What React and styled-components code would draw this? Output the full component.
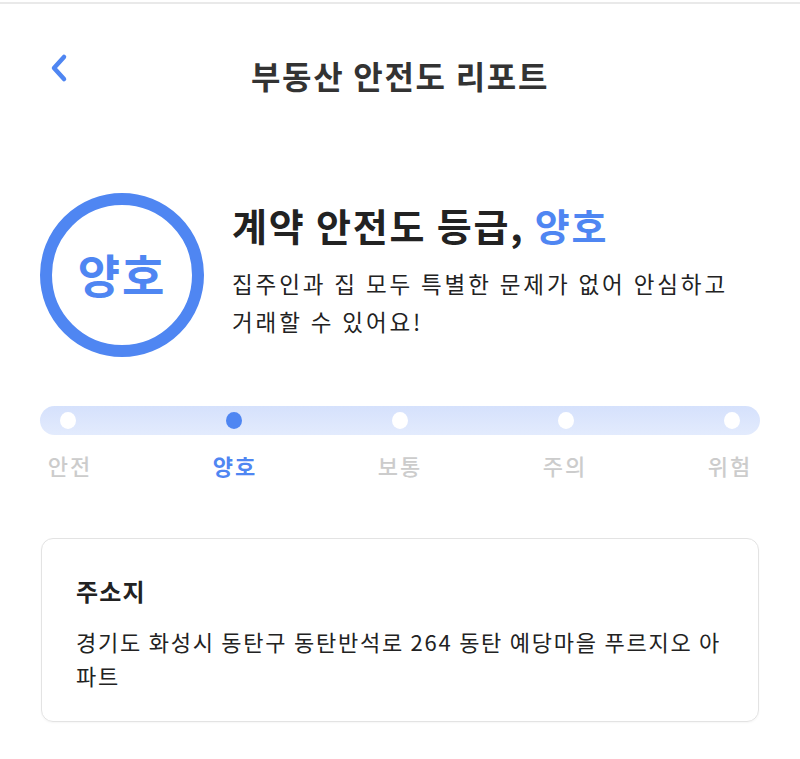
import React from 'react'
import styled, { createGlobalStyle } from "styled-components";

const GlobalStyle = createGlobalStyle`
    html, body {
        margin: 0;
        padding: 0;
        background: #ffffff;
    }
    body {
        font-family: "Noto Sans CJK KR", "Noto Sans", sans-serif;
        color: #222222;
    }
`;

const BLUE = "#4f86f2";

const Page = styled.div`
    width: 800px;
    min-height: 759px;
    border-top: 2px solid #e9e9e9;
    margin-top: 2px;
    box-sizing: border-box;
    padding: 0 40px;
`;

const Header = styled.header`
    position: relative;
    height: 144px;
    display: flex;
    align-items: flex-start;
    justify-content: center;
    padding-top: 45px;
    box-sizing: border-box;
`;

const BackButton = styled.button`
    position: absolute;
    left: 6px;
    top: 47px;
    width: 26px;
    height: 34px;
    padding: 0;
    border: none;
    background: none;
    display: flex;
    align-items: center;
    justify-content: center;
`;

const Title = styled.h1`
    margin: 0;
    font-size: 32px;
    font-weight: 700;
    letter-spacing: 1.7px;
    color: #333333;
    line-height: 52px;
`;

const Summary = styled.section`
    display: flex;
    align-items: flex-start;
    gap: 28px;
    margin-top: 45px;
`;

const GradeCircle = styled.div`
    flex: none;
    width: 164px;
    height: 164px;
    border-radius: 50%;
    border: 12px solid ${BLUE};
    box-sizing: border-box;
    display: flex;
    align-items: center;
    justify-content: center;
    color: ${BLUE};
    font-size: 46px;
    font-weight: 700;
    letter-spacing: 2px;
    padding-bottom: 4px;
`;

const SummaryText = styled.div`
    display: flex;
    flex-direction: column;
    margin-top: 6px;
`;

const Heading = styled.h2`
    margin: 0;
    font-size: 38px;
    font-weight: 700;
    letter-spacing: 1.8px;
    color: #222222;
    line-height: 52px;

    span {
        color: ${BLUE};
    }
`;

const Description = styled.p`
    margin: 13px 0 0;
    font-size: 22.5px;
    letter-spacing: 2.9px;
    line-height: 38px;
    color: #222222;
    white-space: nowrap;
`;

const Scale = styled.section`
    margin-top: 49px;
`;

const Track = styled.div`
    height: 29px;
    border-radius: 15px;
    background: linear-gradient(180deg, #d5e1fc 0%, #e3ebfd 100%);
    display: flex;
    align-items: center;
    justify-content: space-between;
    padding: 0 20px;
`;

const Dot = styled.span`
    width: 16px;
    height: 17px;
    border-radius: 50%;
    background: ${({active}) => active ? BLUE : "#ffffff"};
`;

const Labels = styled.div`
    display: flex;
    justify-content: space-between;
    padding: 0 7px;
    margin-top: 14px;
`;

const Label = styled.span`
    font-size: 22px;
    line-height: 32px;
    letter-spacing: 2px;
    font-weight: ${({active}) => active ? 700 : 500};
    color: ${({active}) => active ? BLUE : "#cccccc"};
    width: 46px;
    text-align: center;
    white-space: nowrap;
`;

const Card = styled.section`
    margin: 57px 1px 0;
    border: 1px solid #e3e3e3;
    border-radius: 12px;
    padding: 34px 34px 29px;
    box-shadow: 0 1px 2px rgba(0, 0, 0, 0.04);
`;

const CardTitle = styled.h3`
    margin: 0;
    font-size: 24px;
    font-weight: 700;
    letter-spacing: 1.2px;
    line-height: 36px;
    color: #222222;
`;

const CardBody = styled.p`
    margin: 15px 0 0;
    font-size: 22px;
    letter-spacing: 1.75px;
    line-height: 34px;
    color: #222222;
`;

const levels = ["안전", "양호", "보통", "주의", "위험"];
const current = 1;

const App = () => {
    return (
        <>
            <GlobalStyle />
            <Page>
                <Header>
                    <BackButton aria-label="back">
                        <svg width="22" height="30" viewBox="0 0 22 30">
                            <path d="M16 4 L6 15 L16 26" fill="none" stroke={BLUE}
                                  strokeWidth="4.5" strokeLinecap="round" strokeLinejoin="round" />
                        </svg>
                    </BackButton>
                    <Title>부동산 안전도 리포트</Title>
                </Header>

                <Summary>
                    <GradeCircle>{levels[current]}</GradeCircle>
                    <SummaryText>
                        <Heading>계약 안전도 등급, <span>{levels[current]}</span></Heading>
                        <Description>
                            집주인과 집 모두 특별한 문제가 없어 안심하고<br />
                            거래할 수 있어요!
                        </Description>
                    </SummaryText>
                </Summary>

                <Scale>
                    <Track>
                        {levels.map((l, i) => <Dot key={l} active={i === current} />)}
                    </Track>
                    <Labels>
                        {levels.map((l, i) => <Label key={l} active={i === current}>{l}</Label>)}
                    </Labels>
                </Scale>

                <Card>
                    <CardTitle>주소지</CardTitle>
                    <CardBody>경기도 화성시 동탄구 동탄반석로 264 동탄 예당마을 푸르지오 아파트</CardBody>
                </Card>
            </Page>
        </>
    );
}

export default App;
